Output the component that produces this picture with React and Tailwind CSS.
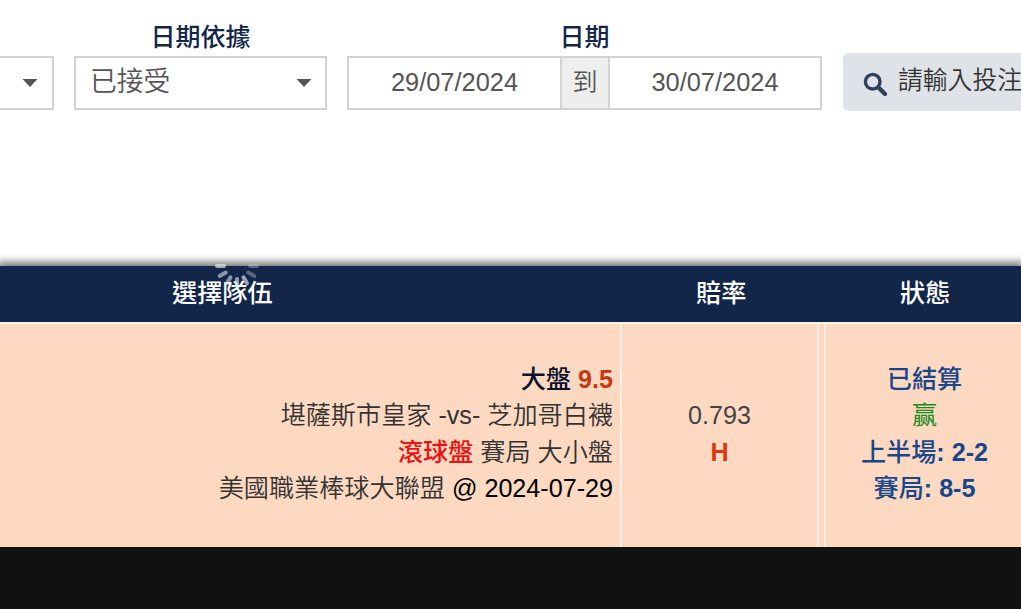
import React from "react";

const Caret = () => (
  <svg width="16" height="8" viewBox="0 0 16 8" className="shrink-0">
    <path d="M0.5 0H15.5L8 8Z" fill="#555" />
  </svg>
);

const spokes = [
  { angle: 90, opacity: 0.75 },
  { angle: 60, opacity: 0.6 },
  { angle: 30, opacity: 0.6 },
  { angle: 0, opacity: 0.65 },
  { angle: -30, opacity: 0.7 },
  { angle: -60, opacity: 0.35 },
  { angle: -90, opacity: 0.35 },
];

const Spinner = () => (
  <svg width="48" height="48" viewBox="-24 -24 48 48" className="absolute left-[213px] -top-[24px]">
    {spokes.map((spoke) => (
      <rect
        key={spoke.angle}
        x="-2"
        y="11"
        width="4"
        height="11"
        rx="2"
        fill="#d9dde4"
        opacity={spoke.opacity}
        transform={`rotate(${spoke.angle})`}
      />
    ))}
  </svg>
);

const Filters = () => {
  return (
    <div className="flex h-[266px] items-start pt-[24px] text-[#555]">
      <div className="mt-[32px] flex h-[54px] w-[54px] shrink-0 items-center justify-end border-2 border-l-0 border-[#d2d2d2] pr-[14px]">
        <Caret />
      </div>

      <div className="ml-[20px] w-[253px] shrink-0">
        <div className="h-[32px] text-center leading-[26px] font-medium text-[#12264a]">日期依據</div>
        <div className="flex h-[54px] items-center justify-between border-2 border-[#d2d2d2] pr-[13px] pl-[14px]">
          <span className="pb-[1px] text-[26.8px] font-[350]">已接受</span>
          <Caret />
        </div>
      </div>

      <div className="ml-[20px] w-[475px] shrink-0">
        <div className="h-[32px] text-center leading-[26px] font-medium text-[#12264a]">日期</div>
        <div className="flex h-[54px] border-2 border-[#d2d2d2] text-center leading-[48px]">
          <div className="w-[211px] text-[25.4px]">29/07/2024</div>
          <div className="w-[50px] border-x-2 border-[#d2d2d2] bg-[#eee] font-[350]">到</div>
          <div className="w-[210px] text-[25.4px]">30/07/2024</div>
        </div>
      </div>

      <div className="ml-[21px] mt-[29px] flex h-[58px] flex-1 items-center overflow-hidden rounded-l-[6px] bg-[#dfe3e8] pl-[20px] whitespace-nowrap">
        <svg width="26" height="26" viewBox="0 0 26 26" className="mt-[5px] shrink-0">
          <circle cx="9.7" cy="9.7" r="7.3" fill="none" stroke="#2e405f" strokeWidth="3.4" />
          <path d="M15.3 15.3L22 22" stroke="#2e405f" strokeWidth="4.4" strokeLinecap="round" />
        </svg>
        <span className="ml-[9px] pb-[2px] text-[24.8px] font-[350] text-[#333]">請輸入投注</span>
      </div>
    </div>
  );
};

const BetTable = () => {
  return (
    <div className="relative text-[25.15px]">
      <div className="flex h-[56px] items-center bg-[#12264a] font-medium text-white shadow-[0_-1px_8px_3px_rgba(0,0,0,0.55)]">
        <div className="w-[621px] pl-[172px]">選擇隊伍</div>
        <div className="w-[200px] pl-[75px]">賠率</div>
        <div className="w-[200px] pl-[79px]">狀態</div>
      </div>

      <div className="relative flex h-[225px] border-t-2 border-[#fff3eb] bg-[#fdd9c2] leading-[36.4px]">
        <div className="flex w-[622px] flex-col items-end justify-center border-r-2 border-[#feeee4] pr-[7px] pb-[4px] text-[#333]">
          <div className="font-medium text-[#0b1330]">
            大盤 <span className="font-bold text-[#c9380f]">9.5</span>
          </div>
          <div className="font-[350]">堪薩斯市皇家 -vs- 芝加哥白襪</div>
          <div className="font-[350]">
            <span className="font-medium text-[#f01010]">滾球盤</span> 賽局 大小盤
          </div>
          <div className="font-[350]">
            美國職業棒球大聯盟 <span className="text-black">@ 2024-07-29</span>
          </div>
        </div>

        <div className="flex w-[197px] flex-col items-center justify-center border-r-2 border-[#feeee4] pb-[4px] text-[#444]">
          <div>0.793</div>
          <div className="font-bold text-[#d63a12]">H</div>
        </div>

        <div className="w-[7px] border-r-2 border-[#feeee4]" />

        <div className="flex flex-1 flex-col items-center justify-center pb-[4px] pl-[2px] font-medium text-[#17478a]">
          <div>已結算</div>
          <div className="font-normal text-[#1c8a1c]">赢</div>
          <div>
            上半場<span className="font-bold">: 2-2</span>
          </div>
          <div>
            賽局<span className="font-bold">: 8-5</span>
          </div>
        </div>
      </div>

      <Spinner />
    </div>
  );
};

const App = () => {
  return (
    <div className="flex h-screen w-full flex-col overflow-hidden bg-[#111] font-['Liberation_Sans','Noto_Sans_CJK_TC',sans-serif] text-[25px]">
      <div className="bg-white">
        <Filters />
        <BetTable />
      </div>
    </div>
  );
};

export default App;
